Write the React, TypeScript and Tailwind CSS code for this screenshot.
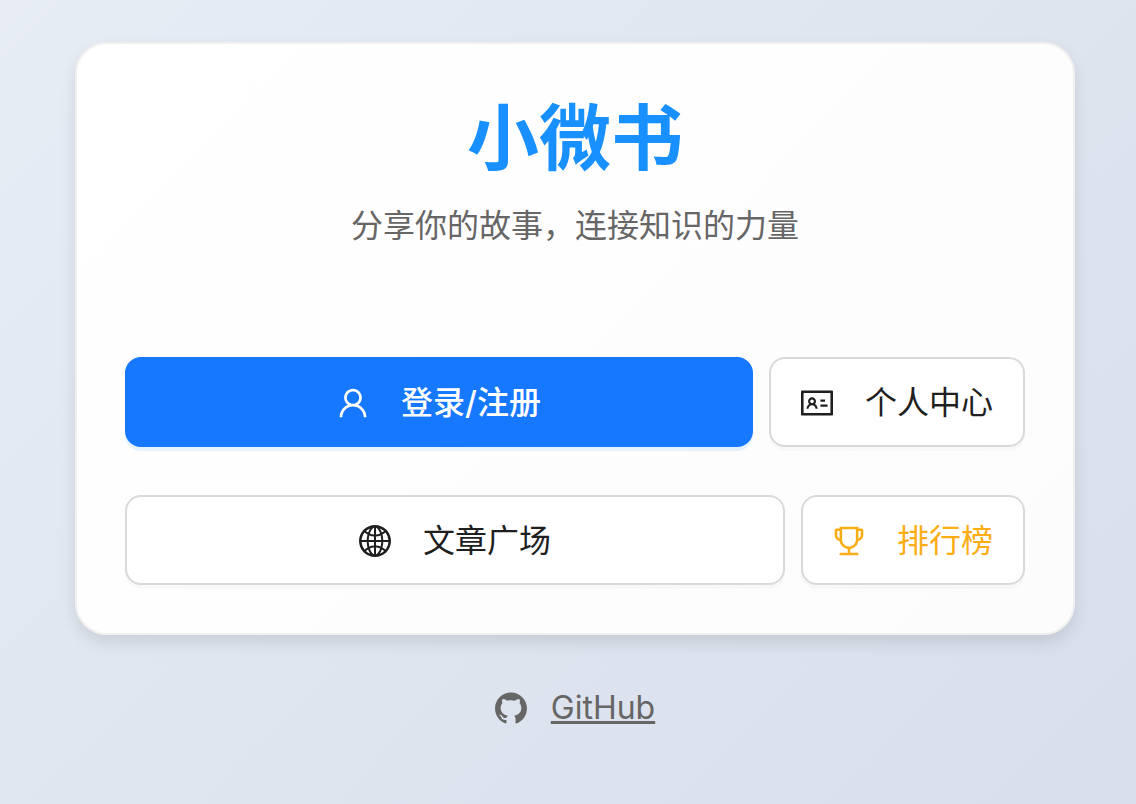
import React from "react";
import {
  AiFillGithub,
  AiOutlineGlobal,
  AiOutlineIdcard,
  AiOutlineTrophy,
  AiOutlineUser,
} from "react-icons/ai";

const buttonBase =
  "flex items-center justify-center gap-8 h-[90px] px-[30px] pt-0.5 rounded-2xl border-2 text-[32px] leading-10 whitespace-nowrap cursor-pointer";

// trims the empty margin that the icons carry on every side
const iconBox = "64 64 896 896";

export default function App() {
  return (
    <div className="min-h-screen bg-linear-135 from-[#e7ecf5] via-[#dfe6f0] to-[#d8deeb] pt-[42px] pb-16 pl-[75px] pr-[61px] font-['Inter','Noto_Sans_CJK_SC',sans-serif]">
      <main className="rounded-[32px] border-2 border-[#f0f0f0] bg-linear-135 from-white to-[#fcfcfc] p-12 shadow-[0_8px_16px_rgba(0,0,0,0.1)]">
        <div className="text-center">
          <h1 className="text-[72px] leading-[92px] font-semibold text-[#1890ff]">
            小微书
          </h1>
          <p className="mt-4 text-[32px] leading-[52px] text-[#666666]">
            分享你的故事，连接知识的力量
          </p>
        </div>

        <div className="mt-[105px] flex flex-col gap-12">
          <div className="flex gap-4">
            <button
              type="button"
              className={`${buttonBase} flex-1 border-[#1677ff] bg-[#1677ff] font-medium text-white shadow-[0_4px_0_rgba(5,145,255,0.1)]`}
            >
              <AiOutlineUser size={32} viewBox={iconBox} />
              <span>登录/注册</span>
            </button>
            <button
              type="button"
              className={`${buttonBase} border-[#d9d9d9] bg-white text-[#1f1f1f] shadow-[0_4px_0_rgba(0,0,0,0.02)]`}
            >
              <AiOutlineIdcard size={32} viewBox={iconBox} />
              <span>个人中心</span>
            </button>
          </div>
          <div className="flex gap-4">
            <button
              type="button"
              className={`${buttonBase} flex-1 border-[#d9d9d9] bg-white text-[#1f1f1f] shadow-[0_4px_0_rgba(0,0,0,0.02)]`}
            >
              <AiOutlineGlobal size={32} viewBox={iconBox} />
              <span>文章广场</span>
            </button>
            <button
              type="button"
              className={`${buttonBase} border-[#d9d9d9] bg-white text-[#faad14] shadow-[0_4px_0_rgba(0,0,0,0.02)]`}
            >
              <AiOutlineTrophy size={32} viewBox={iconBox} />
              <span>排行榜</span>
            </button>
          </div>
        </div>
      </main>

      <footer className="mt-12 flex items-center justify-center gap-6 text-[32px] leading-[50px] text-[#666666]">
        <AiFillGithub size={32} viewBox={iconBox} />
        <a href="#github" className="underline">
          GitHub
        </a>
      </footer>
    </div>
  );
}
